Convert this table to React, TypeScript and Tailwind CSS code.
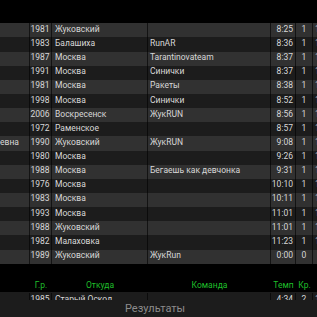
import React from "react";

type Row = {
  name: string;
  year: string;
  city: string;
  team: string;
  pace: string;
  cat: string;
  extra: string;
};

const rows: Row[] = [
  { name: "", year: "1981", city: "Жуковский", team: "", pace: "8:25", cat: "1", extra: "1" },
  { name: "", year: "1983", city: "Балашиха", team: "RunAR", pace: "8:36", cat: "1", extra: "1" },
  { name: "", year: "1987", city: "Москва", team: "Tarantinovateam", pace: "8:37", cat: "1", extra: "1" },
  { name: "", year: "1991", city: "Москва", team: "Синички", pace: "8:37", cat: "1", extra: "1" },
  { name: "", year: "1981", city: "Москва", team: "Ракеты", pace: "8:38", cat: "1", extra: "1" },
  { name: "", year: "1998", city: "Москва", team: "Синички", pace: "8:52", cat: "1", extra: "1" },
  { name: "", year: "2006", city: "Воскресенск", team: "ЖукRUN", pace: "8:56", cat: "1", extra: "1" },
  { name: "", year: "1972", city: "Раменское", team: "", pace: "8:57", cat: "1", extra: "1" },
  { name: "Сергеевна", year: "1990", city: "Жуковский", team: "ЖукRUN", pace: "9:08", cat: "1", extra: "1" },
  { name: "", year: "1980", city: "Москва", team: "", pace: "9:26", cat: "1", extra: "1" },
  { name: "", year: "1988", city: "Москва", team: "Бегаешь как девчонка", pace: "9:31", cat: "1", extra: "1" },
  { name: "", year: "1976", city: "Москва", team: "", pace: "10:10", cat: "1", extra: "1" },
  { name: "", year: "1983", city: "Москва", team: "", pace: "10:11", cat: "1", extra: "1" },
  { name: "", year: "1993", city: "Москва", team: "", pace: "11:01", cat: "1", extra: "1" },
  { name: "", year: "1988", city: "Жуковский", team: "", pace: "11:01", cat: "1", extra: "1" },
  { name: "", year: "1982", city: "Малаховка", team: "", pace: "11:23", cat: "1", extra: "1" },
  { name: "", year: "1989", city: "Жуковский", team: "ЖукRun", pace: "0:00", cat: "0", extra: "" },
];

const cell = "h-full shrink-0 border-r border-black/60 overflow-hidden whitespace-nowrap pt-[0.5px]";

const TableRow: React.FC<{ row: Row; light: boolean; className?: string }> = ({ row, light, className }) => (
  <div className={`flex h-[14.15px] ${light ? "bg-[#313131]" : "bg-[#1c1c1c]"} ${className ?? ""}`}>
    <div className={`${cell} w-[30px] flex justify-end pr-[10px]`}>{row.name}</div>
    <div className={`${cell} w-[22px] text-right pr-[1.5px]`}>{row.year}</div>
    <div className={`${cell} w-[96px] pl-[3px]`}>{row.city}</div>
    <div className={`${cell} w-[123px] pl-[2px]`}>{row.team}</div>
    <div className={`${cell} w-[25px] text-right pr-[2px]`}>{row.pace}</div>
    <div className={`${cell} w-[17px] text-center`}>{row.cat}</div>
    <div className={`${cell} w-[20px] pl-[2px]`}>{row.extra}</div>
  </div>
);

export default function App() {
  return (
    <div className="w-[317px] h-[317px] overflow-hidden bg-black font-['Roboto',sans-serif] text-[8.5px] leading-[10px] text-[#d8d8d8]">
      <div className="h-[23.3px]" />

      {/* results rows */}
      <div className="flex flex-col">
        {rows.map((r, i) => (
          <TableRow key={i} row={r} light={i % 2 === 0} />
        ))}
      </div>

      {/* column header */}
      <div className="flex h-[28px] items-end pb-[1.5px] text-[8.5px] text-[#1fbf2a]">
        <div className="w-[30px] shrink-0" />
        <div className="w-[22px] shrink-0 text-center">Г.р.</div>
        <div className="w-[96px] shrink-0 text-center">Откуда</div>
        <div className="w-[123px] shrink-0 text-center">Команда</div>
        <div className="w-[25px] shrink-0 text-center">Темп</div>
        <div className="w-[17px] shrink-0 text-center">Кр.</div>
      </div>

      {/* next group, hidden under the sheet */}
      <div className="h-[8px] overflow-hidden bg-[#1c1c1c]">
        <div className="mt-[1.5px]">
          <TableRow
            row={{ name: "", year: "1985", city: "Старый Оскол", team: "", pace: "4:34", cat: "2", extra: "1" }}
            light={false}
          />
        </div>
      </div>

      <div className="flex h-[17px] items-center bg-[#1c1c1c] pl-[125px] pt-[1px] text-[11px] text-[#8c8c8c]">
        Результаты
      </div>
    </div>
  );
}
